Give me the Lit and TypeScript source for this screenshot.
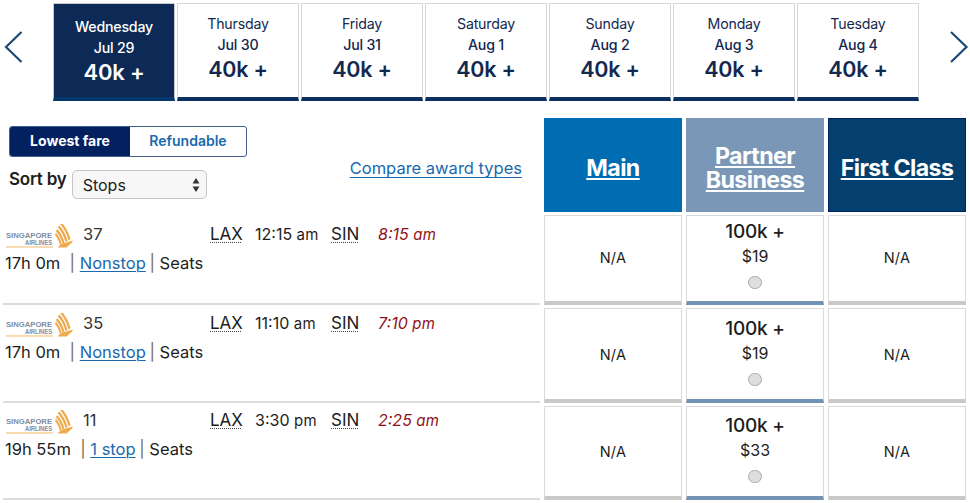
import { LitElement, html, css, svg } from "lit";
import { customElement } from "lit/decorators.js";

const days = [
  ["Wednesday", "Jul 29"], ["Thursday", "Jul 30"], ["Friday", "Jul 31"], ["Saturday", "Aug 1"],
  ["Sunday", "Aug 2"], ["Monday", "Aug 3"], ["Tuesday", "Aug 4"],
];
const flights = [
  { no: "37", dep: "12:15", depM: "am", arr: "8:15", arrM: "am", dur: "17h 0m", stop: "Nonstop", price: "$19" },
  { no: "35", dep: "11:10", depM: "am", arr: "7:10", arrM: "pm", dur: "17h 0m", stop: "Nonstop", price: "$19" },
  { no: "11", dep: "3:30", depM: "pm", arr: "2:25", arrM: "am", dur: "19h 55m", stop: "1 stop", price: "$33" },
];

const logo = svg`<svg class="logo" width="70" height="26" viewBox="0 0 70 26">
  <rect x="1" y="23.2" width="47" height="1.5" fill="#f7cf9a"/>
  <text x="1" y="15" textLength="46" lengthAdjust="spacingAndGlyphs" class="lg">SINGAPORE</text>
  <text x="20" y="22" textLength="27" lengthAdjust="spacingAndGlyphs" class="lg">AIRLINES</text>
  <g fill="#eeaa4d">
    <path d="M55 1 L58 1 C61 5 64 10 65.5 16 L63.5 17.5 C62 11 59 5.5 55 1 Z"/>
    <path d="M52.5 4 L54.5 2.8 C58 6.5 61 12 62.5 18 L60.5 19 C59 13.5 56.5 8 52.5 4 Z"/>
    <path d="M50.8 8 L52.5 6.2 C55.5 9.5 58 14 59.5 19.5 L57.5 20.5 C56 15.5 54 11.5 50.8 8 Z"/>
    <path d="M50 12 L51 9.8 C53.5 12.5 55.5 16 56.5 20.5 L55 22 C54 18 52.5 15 50 12 Z"/>
    <path d="M52.5 24.5 L56.5 20.8 L68 17.5 L67 19.5 L61.5 24.5 Z"/>
  </g>
</svg>`;

@customElement("app-root")
export class AppRoot extends LitElement {
  static styles = css`
    :host { display: block; width: 970px; height: 503px; overflow: hidden; background: #fff; font-family: Inter, "Noto Sans", sans-serif; color: #1d1d22; }
    .dates { display: flex; align-items: flex-start; height: 118px; padding-top: 3px; box-sizing: border-box; }
    .nav { flex: none; width: 53px; height: 87px; display: flex; align-items: center; padding-left: 4px; box-sizing: border-box; }
    .nav svg { flex: none; }
    .nav.next { width: 51px; padding-left: 30px; }
    .tabs { display: flex; gap: 2px; flex: none; }
    .tab { width: 122px; height: 98px; box-sizing: border-box; border: 1.5px solid #d6d6d6; border-bottom: 4px solid #0b2f5f; text-align: center; color: #13294f; padding-top: 11px; background: #fff; }
    .tab.sel { background: #0d2a57; color: #fff; border-color: #c8ccd2; border-bottom-color: #06386b; padding-top: 14px; font-weight: 500; }
    .day { font-size: 14.2px; line-height: 17px; letter-spacing: -0.2px; }
    .dt { font-size: 14.2px; line-height: 17px; margin-top: 4px; font-weight: 500; letter-spacing: -0.2px; }
    .pts { font-size: 21.5px; line-height: 26px; font-weight: 600; margin-top: 3px; letter-spacing: -0.2px; }
    .sel .pts { font-size: 22px; }
    .head { display: grid; grid-template-columns: 544px 142px 142px 142px; height: 97px; }
    .hl { display: grid; grid-template-columns: 1fr auto; align-content: start; padding: 8px 22px 0 9px; }
    .toggle { display: flex; width: 238px; height: 31px; box-sizing: border-box; border: 1px solid #3f5f8d; border-radius: 3px; overflow: hidden; font-size: 14px; font-weight: 600; grid-column: 1 / 3; }
    .toggle span { display: flex; align-items: center; justify-content: center; padding-bottom: 2px; }
    .on { width: 120px; background: #03205f; color: #fff; font-weight: 700; }
    .off { flex: 1; color: #1a69ae; }
    .sort { display: flex; align-items: flex-start; gap: 5px; margin-top: 13px; font-size: 17px; font-weight: 600; }
    .sort label { line-height: 20px; letter-spacing: -0.2px; margin-top: -1px; }
    .select { width: 135px; height: 29px; box-sizing: border-box; border: 1.5px solid #c6c6c6; border-radius: 5px; background: #f7f7f7; display: flex; justify-content: space-between; align-items: center; padding: 0 6px 0 10px; font-weight: 400; font-size: 16px; color: #222; }
    .compare { align-self: start; justify-self: end; grid-column: 2; grid-row: 2; margin-top: 1px; font-size: 16.5px; color: #1a69ae; text-decoration: underline; text-underline-offset: 3px; text-decoration-thickness: 1px; }
    .col { width: 138px; height: 94px; box-sizing: border-box; display: flex; align-items: center; justify-content: center; padding-top: 5px; text-align: center; color: #fff; font-size: 23.2px; line-height: 24px; font-weight: 700; letter-spacing: -0.6px; }
    .col u { text-underline-offset: 2px; }
    .main { background: #006cb2; }
    .partner { background: #7a97b7; }
    .firstc { background: #03406f; border: 1px solid #03205f; }
    .row { display: grid; grid-template-columns: 540px 142px 142px 142px; align-items: end; }
    .r0 { height: 90px; }
    .r1 { height: 98px; }
    .r2 { height: 97px; }
    .info { align-self: stretch; margin-left: 3px; border-bottom: 2px solid #dcdcdc; padding-left: 2px; box-sizing: border-box; font-size: 16px; }
    .r0 .info { padding-top: 8px; }
    .r1 .info { padding-top: 7px; }
    .r2 .info { padding-top: 6px; }
    .line1 { display: grid; grid-template-columns: 78px 127px 45px 76px 47px auto; height: 22px; line-height: 22px; align-items: start; justify-content: start; }
    .logo { display: block; overflow: visible; }
    .lg { font: 700 7px "Liberation Sans", sans-serif; fill: #7f8ca2; }
    .num { color: #333; font-size: 16.5px; }
    abbr { font-size: 17px; text-decoration: underline dotted #444 1px; text-underline-offset: 2px; text-decoration-skip-ink: none; }
    .m { font-size: 15px; letter-spacing: .3px; }
    .arr { color: #8f1116; font-style: italic; }
    .line2 { margin-top: 8px; line-height: 20px; height: 20px; font-size: 16.5px; white-space: pre; }
    .line2 a { color: #1a69ae; text-decoration: underline; text-underline-offset: 2px; text-decoration-thickness: 1px; margin-right: -1px; }
    .sep { color: #7a6a55; }
    .cellw { padding-left: 4px; }
    .cell { width: 138px; box-sizing: border-box; border: 1.5px solid #dadada; border-bottom: 4px solid #c9c9c9; display: flex; flex-direction: column; align-items: center; justify-content: flex-end; padding-bottom: 35px; background: #fff; text-align: center; }
    .r0 .cell { height: 90px; padding-bottom: 34px; }
    .r1 .cell { height: 95px; }
    .r2 .cell { height: 94px; }
    .cell.p { border-bottom-color: #7293b4; }
    .r0 .cell.p { padding-bottom: 12px; }
    .r1 .cell.p, .r2 .cell.p { padding-bottom: 13px; }
    .na { font-size: 14.5px; line-height: 18px; letter-spacing: .3px; }
    .miles { font-size: 19px; line-height: 22px; font-weight: 500; letter-spacing: -.2px; }
    .price { font-size: 16px; line-height: 20px; margin-top: 3px; }
    .radio { width: 13.5px; height: 13.5px; box-sizing: border-box; border-radius: 50%; background: #dedede; border: 1px solid #a9a9a9; margin-top: 10px; }
  `;

  render() {
    return html`
      <div class="dates">
        <div class="nav"><svg width="20" height="34" viewBox="0 0 20 34"><path d="M17.5 2 L2 17 L17.5 32" fill="none" stroke="#1c4a78" stroke-width="2.2"/></svg></div>
        <div class="tabs">
          ${days.map((d, i) => html`<div class="tab ${i === 0 ? "sel" : ""}">
            <div class="day">${d[0]}</div><div class="dt">${d[1]}</div><div class="pts">40k +</div></div>`)}
        </div>
        <div class="nav next"><svg width="20" height="34" viewBox="0 0 20 34"><path d="M2 2 L17.5 17 L2 32" fill="none" stroke="#1c4a78" stroke-width="2.2"/></svg></div>
      </div>
      <div class="head">
        <div class="hl">
          <div class="toggle"><span class="on">Lowest fare</span><span class="off">Refundable</span></div>
          <div class="sort"><label>Sort by</label>
            <div class="select">Stops <svg width="8" height="16" viewBox="0 0 8 16"><path d="M4 1 L7.5 6.5 H.5 Z M4 15 L.5 9.5 H7.5 Z" fill="#333"/></svg></div>
          </div>
          <a class="compare">Compare award types</a>
        </div>
        <div class="col main"><u>Main</u></div>
        <div class="col partner"><u>Partner<br>Business</u></div>
        <div class="col firstc"><u>First Class</u></div>
      </div>
      ${flights.map((f, i) => html`
        <div class="row r${i}">
          <div class="info">
            <div class="line1">
              ${logo}
              <span class="num">${f.no}</span>
              <abbr>LAX</abbr>
              <span>${f.dep} <span class="m">${f.depM}</span></span>
              <abbr>SIN</abbr>
              <span class="arr">${f.arr} <span class="m">${f.arrM}</span></span>
            </div>
            <div class="line2">${f.dur}  <span class="sep">|</span> <a>${f.stop}</a> <span class="sep">|</span> Seats</div>
          </div>
          <div class="cellw"><div class="cell"><span class="na">N/A</span></div></div>
          <div class="cellw"><div class="cell p">
            <div class="miles">100k +</div><div class="price">${f.price}</div><div class="radio"></div>
          </div></div>
          <div class="cellw"><div class="cell"><span class="na">N/A</span></div></div>
        </div>`)}
    `;
  }
}
